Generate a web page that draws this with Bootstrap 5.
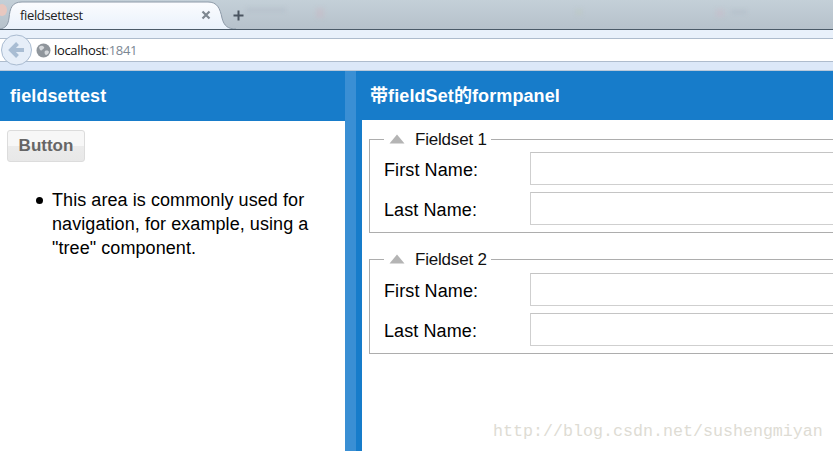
<!DOCTYPE html>
<html lang="en">
<head>
<meta charset="utf-8">
<title>fieldsettest</title>
<link href="https://cdn.jsdelivr.net/npm/bootstrap@5.3.0/dist/css/bootstrap.min.css" rel="stylesheet">
<style>
html,body{height:451px;overflow:hidden;background:#fff;font-family:"Liberation Sans","Noto Sans CJK SC",sans-serif;color:#000}
.tabstrip{height:30px;background:linear-gradient(#c4d0d8,#b6c1cb);border-bottom:1px solid #4b5a68;position:relative;overflow:hidden}
.tabshape{position:absolute;left:0;top:0}
.tabtitle{position:absolute;left:20px;top:7px;font:13px/17px "Open Sans","Liberation Sans",sans-serif;color:#222;letter-spacing:-.35px}
.tabclose{position:absolute;left:201px;top:10px}
.tabnew{position:absolute;left:233px;top:10px}
.blurspots{position:absolute;left:236px;top:0;filter:blur(2px)}
.navstrip{height:41px;background:#e9f1fb;padding-top:8px;position:relative}
.addrbar{height:24px;background:#fff;border-top:1px solid #aebccd;border-bottom:1px solid #aebccd;padding-left:36px;gap:3px}
.navfoot{height:9px;background:#dce8f8;border-bottom:1px solid #b8c8da}
.backbtn{position:absolute;left:1px;top:4px}
.hosttext{font:13px/20px "Open Sans","Liberation Sans",sans-serif;color:#111;letter-spacing:-.32px}
.hosttext span{color:#7b8794}
.shell{height:380px;background:#177cca}
.westpane{width:345px;background:#fff;flex:none}
.splitbar{width:11px;background:#3a8fd4;flex:none}
.eastpane{flex:1 1 auto;min-width:0;background:#177cca;border-top-left-radius:5px;padding-left:6px}
.panelhead{background:#177cca;color:#fff;font-weight:700;font-size:18px;line-height:22px;letter-spacing:.1px}
.westhead{height:50px;padding:14px 10px}
.easthead{height:49px;padding:14px 8px;margin-left:-6px;padding-left:14px;border-top-left-radius:5px}
.ghostbtn{width:78px;height:32px;margin:9px 0 0 7px;padding:0;background:linear-gradient(#f7f7f7 50%,#ebebeb 50%,#e8e8e8);border:1px solid #dcdcdc;border-radius:3px;color:#666;font-weight:700;font-size:17px;line-height:26px}
.navlist{margin:26px 30px 0 0;padding-left:52px;font-size:18px;line-height:24px;letter-spacing:.07px;list-style:none}
.navlist li{position:relative}
.navlist li::before{content:"";position:absolute;left:-16px;top:9px;width:7px;height:7px;border-radius:50%;background:#000}
.eastbody{background:#fff;height:331px;overflow:hidden;padding:9px 0 0 7px}
.fsbox{border:1px solid #adadad;margin:0 -40px 0 0;padding:0 0 7px 14px;min-width:0}
.fsbox + .fsbox{margin-top:16px}
.fsbox + .fsbox .fslegend{margin-bottom:4px}
.fslegend{float:none;width:auto;margin:0 0 3px 0;padding:0 4px 0 5px;font-size:17px;line-height:20px;color:#111;display:flex;align-items:center;gap:10px;letter-spacing:-.2px}
.fslegend span{line-height:18px;margin-top:2px}
.fieldrow{height:33px;margin-bottom:7px}
.fieldrow:last-child{margin-bottom:0}
.fieldlabel{width:146px;flex:none;font-size:18px;line-height:37px;height:33px;color:#000;letter-spacing:.1px}
.fieldinput{flex:1 1 auto;height:33px;border:1px solid #cfcfcf;border-top-color:#c4c4c4;border-radius:0;padding:0;box-shadow:none;background:#fff}
.wmark{position:absolute;left:493px;top:422px;font:16.67px/20px "Liberation Mono",monospace;color:#dedcd4;pointer-events:none;white-space:nowrap}
</style>
</head>
<body>
<div class="tabstrip">
  <svg class="blurspots" width="597" height="30" viewBox="0 0 597 30"><g opacity=".35"><rect x="10" y="8" width="40" height="4" fill="#aab4c0"/><rect x="80" y="8" width="8" height="10" fill="#ceb4c0"/><rect x="340" y="9" width="6" height="6" fill="#bcc9b8"/><rect x="480" y="9" width="8" height="8" fill="#ceb8c6"/><rect x="495" y="10" width="16" height="4" fill="#aab4c0"/></g></svg>
  <svg class="tabshape" width="250" height="30" viewBox="0 0 250 30"><defs><linearGradient id="tg" x1="0" y1="0" x2="0" y2="1"><stop offset="0" stop-color="#fbfcfe"/><stop offset="1" stop-color="#e9f1fb"/></linearGradient></defs><ellipse cx="2" cy="10" rx="5" ry="6" fill="#e8c8c0"/><path d="M0 29 C5 28 8 26 9 18 C10 8 12 2 22 2 L208 2 C217 2 220 8 222 18 C224 26 228 29 236 29 L236 30 L0 30Z" fill="url(#tg)" stroke="#8d9aa8" stroke-width="1"/></svg>
  <span class="tabtitle">fieldsettest</span>
  <svg class="tabclose" width="10" height="10" viewBox="0 0 10 10"><path d="M1.5 1.5L8.5 8.5M8.5 1.5L1.5 8.5" stroke="#7e8790" stroke-width="2.2"/></svg>
  <svg class="tabnew" width="11" height="11" viewBox="0 0 11 11"><path d="M5.5 0.5V10.5M0.5 5.5H10.5" stroke="#4a5460" stroke-width="2"/></svg>
</div>
<div class="navstrip">
  <div class="addrbar d-flex align-items-center">
    <svg width="15" height="15" viewBox="0 0 15 15"><circle cx="7.5" cy="7.5" r="7" fill="#8f959b"/><path d="M3 4c2-2 4-1 5 0s-1 2-2 3-2 1-3-3zM9 8c2-1 4 0 4 1s-2 3-3 3-2-3-1-4z" fill="#d5d8db"/></svg>
    <span class="hosttext">localhost<span>:1841</span></span>
  </div>
  <div class="navfoot"></div>
  <svg class="backbtn" width="32" height="32" viewBox="0 0 32 32"><circle cx="15.500" cy="16" r="15" fill="#e6eef8" stroke="#a9bbd0"/><path d="M23 16H11M16.500 9.500L10 16L16.500 22.500" fill="none" stroke="#a9bdd3" stroke-width="4"/></svg>
</div>
<div class="shell d-flex">
  <div class="westpane">
    <div class="panelhead westhead">fieldsettest</div>
    <button type="button" class="btn ghostbtn">Button</button>
    <ul class="navlist"><li>This area is commonly used for navigation, for example, using a "tree" component.</li></ul>
  </div>
  <div class="splitbar"></div>
  <div class="eastpane">
    <div class="panelhead easthead">带fieldSet的formpanel</div>
    <div class="eastbody">
      <fieldset class="fsbox">
        <legend class="fslegend"><svg width="16" height="10" viewBox="0 0 16 10"><path d="M8 0.500L15.500 9.500H0.500Z" fill="#b4b4b4"/></svg><span>Fieldset 1</span></legend>
        <div class="fieldrow d-flex"><label class="fieldlabel" for="a1">First Name:</label><input id="a1" class="form-control fieldinput" type="text"></div>
        <div class="fieldrow d-flex"><label class="fieldlabel" for="a2">Last Name:</label><input id="a2" class="form-control fieldinput" type="text"></div>
      </fieldset>
      <fieldset class="fsbox">
        <legend class="fslegend"><svg width="16" height="10" viewBox="0 0 16 10"><path d="M8 0.500L15.500 9.500H0.500Z" fill="#b4b4b4"/></svg><span>Fieldset 2</span></legend>
        <div class="fieldrow d-flex"><label class="fieldlabel" for="b1">First Name:</label><input id="b1" class="form-control fieldinput" type="text"></div>
        <div class="fieldrow d-flex"><label class="fieldlabel" for="b2">Last Name:</label><input id="b2" class="form-control fieldinput" type="text"></div>
      </fieldset>
    </div>
  </div>
</div>
<div class="wmark">http://blog.csdn.net/sushengmiyan</div>
<script src="https://cdn.jsdelivr.net/npm/bootstrap@5.3.0/dist/js/bootstrap.bundle.min.js"></script>
</body>
</html>
